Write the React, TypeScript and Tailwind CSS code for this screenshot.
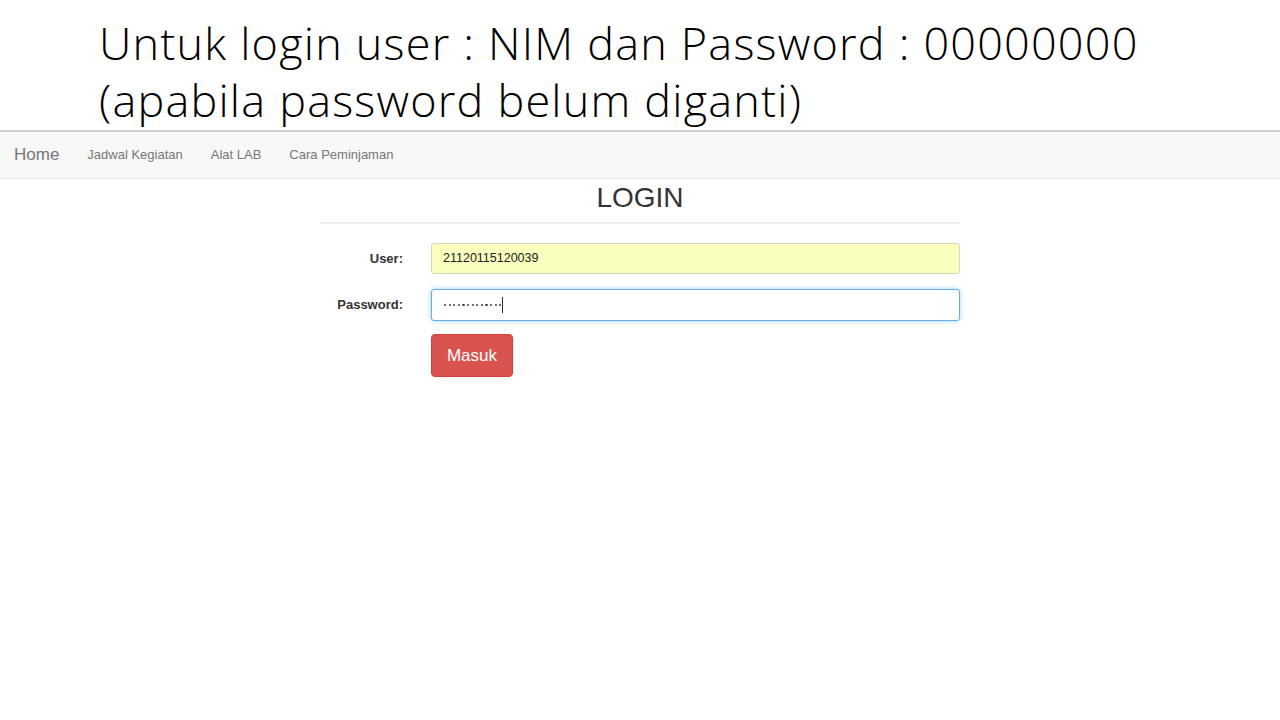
import React from "react";

export default function App() {
  const dots = Array.from({ length: 13 });
  return (
    <div className="w-[1280px] h-[720px] bg-white overflow-hidden relative">
      <div
        className="pl-[99px] pt-[14px] h-[130px] text-black font-light text-[45px] leading-[57px] tracking-[1.2px]"
        style={{ fontFamily: '"Open Sans", sans-serif' }}
      >
        <div className="whitespace-nowrap">Untuk login user : NIM dan Password : 00000000</div>
        <div className="whitespace-nowrap">(apabila password belum diganti)</div>
      </div>
      <div style={{ fontFamily: '"Liberation Sans", Arial, sans-serif' }}>
        <div className="h-[49px] border-t-2 border-[#d0d0d0] border-b border-b-[#e7e7e7] bg-[#f8f8f8] flex items-center">
          <span className="ml-[14px] text-[17px] text-[#777]">Home</span>
          <span className="ml-[28px] text-[13px] text-[#777]">Jadwal Kegiatan</span>
          <span className="ml-[28px] text-[13px] text-[#777]">Alat LAB</span>
          <span className="ml-[28px] text-[13px] text-[#777]">Cara Peminjaman</span>
        </div>
        <div className="w-[640px] mx-auto">
          <div className="pt-[2px] text-center text-[28px] text-[#333] leading-[34px]">LOGIN</div>
          <div className="mt-[7px] border-t-2 border-[#eee]"></div>
          <div className="mt-[19px] flex items-center">
            <div className="w-[83px] text-right text-[13px] font-bold text-[#333]">User:</div>
            <div className="ml-[28px] flex-1 h-[31px] rounded-[3px] border border-[#d6d6c0] bg-[#faffbd] flex items-center pl-[11px] text-[12.5px] text-[#222]">
              21120115120039
            </div>
          </div>
          <div className="mt-[15px] flex items-center">
            <div className="w-[83px] text-right text-[13px] font-bold text-[#333]">Password:</div>
            <div className="ml-[28px] flex-1 h-[32px] rounded-[3px] border border-[#66afe9] shadow-[0_0_5px_rgba(102,175,233,0.6)] bg-white flex items-center pl-[12px]">
              <div className="flex items-center gap-[2.3px]">
                {dots.map((_, i) => (
                  <span key={i} className="w-[2.3px] h-[2.3px] rounded-full bg-[#444]"></span>
                ))}
              </div>
              <span className="w-px h-[16px] bg-[#333] ml-[1px]"></span>
            </div>
          </div>
          <div className="mt-[13px] ml-[111px]">
            <div className="w-[82px] h-[43px] rounded-[4px] bg-[#d9534f] border border-[#d43f3a] text-white text-[17px] flex items-center justify-center">
              Masuk
            </div>
          </div>
        </div>
      </div>
    </div>
  );
}
